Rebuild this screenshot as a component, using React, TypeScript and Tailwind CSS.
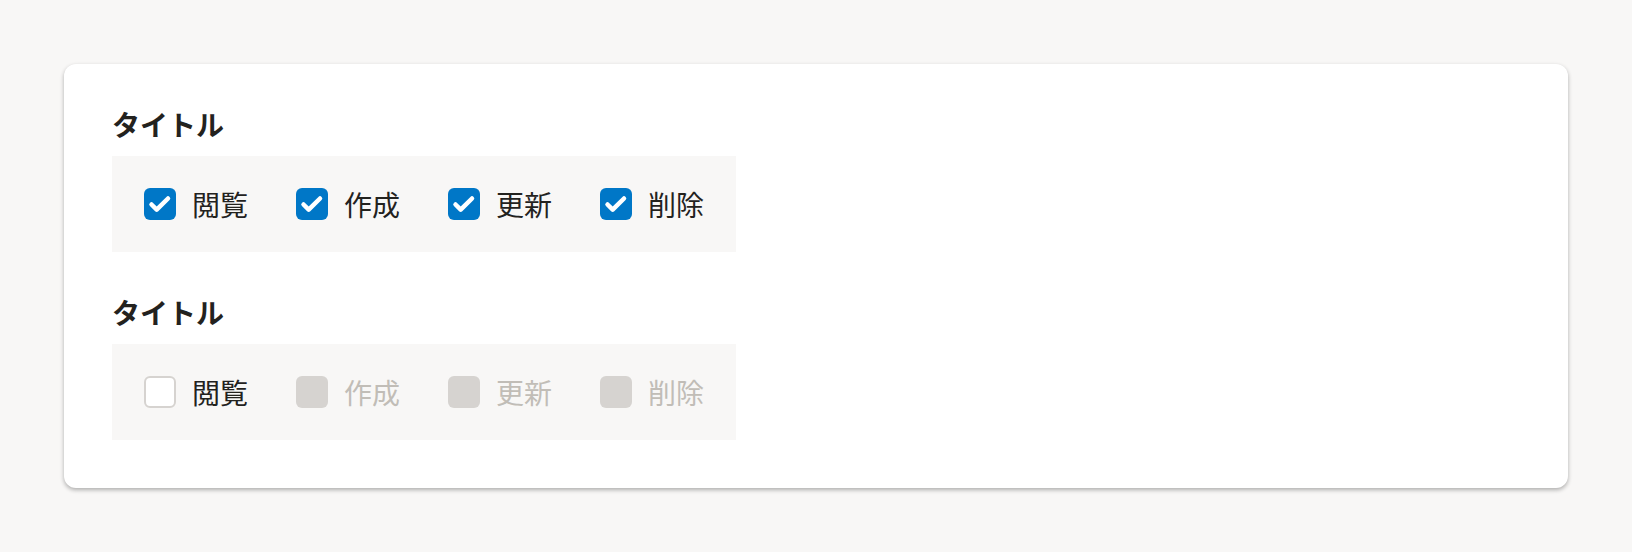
const font = { fontFamily: '"Noto Sans CJK JP", "Noto Sans", sans-serif' };

type Item = { label: string; checked: boolean; disabled: boolean };

const Check = () => (
  <svg viewBox="0 0 32 32" className="w-8 h-8">
    <path
      d="M7.5 16.5l5.2 5.2L24 10.5"
      fill="none"
      stroke="#fff"
      strokeWidth="4.5"
      strokeLinecap="round"
      strokeLinejoin="round"
    />
  </svg>
);

const CheckItem = ({ label, checked, disabled }: Item) => {
  let box = "bg-white border-2 border-[#d6d3d0]";
  if (checked) box = "bg-[#0077c7]";
  else if (disabled) box = "bg-[#d6d3d0]";

  return (
    <label className="flex items-center gap-4">
      <span className={`w-8 h-8 rounded-md flex items-center justify-center ${box}`}>
        {checked && <Check />}
      </span>
      <span
        className={`text-[28px] leading-8 ${disabled ? "text-[#c1bdb7]" : "text-[#23221e]"}`}
      >
        {label}
      </span>
    </label>
  );
};

const Group = ({ items }: { items: Item[] }) => (
  <div className="flex flex-col items-start gap-5">
    <h2 className="text-[28px] leading-6 font-bold text-[#23221e]">タイトル</h2>
    <div className="flex gap-12 bg-[#f8f7f6] p-8">
      {items.map((item) => (
        <CheckItem key={item.label} {...item} />
      ))}
    </div>
  </div>
);

const labels = ["閲覧", "作成", "更新", "削除"];

export default function App() {
  const first = labels.map((label) => ({ label, checked: true, disabled: false }));
  const second = labels.map((label, i) => ({ label, checked: false, disabled: i > 0 }));

  return (
    <div className="min-h-screen bg-[#f8f7f6] p-16" style={font}>
      <div className="bg-white rounded-xl p-12 flex flex-col gap-12 shadow-[0_2px_4px_0_rgba(3,3,2,0.3)]">
        <Group items={first} />
        <Group items={second} />
      </div>
    </div>
  );
}
